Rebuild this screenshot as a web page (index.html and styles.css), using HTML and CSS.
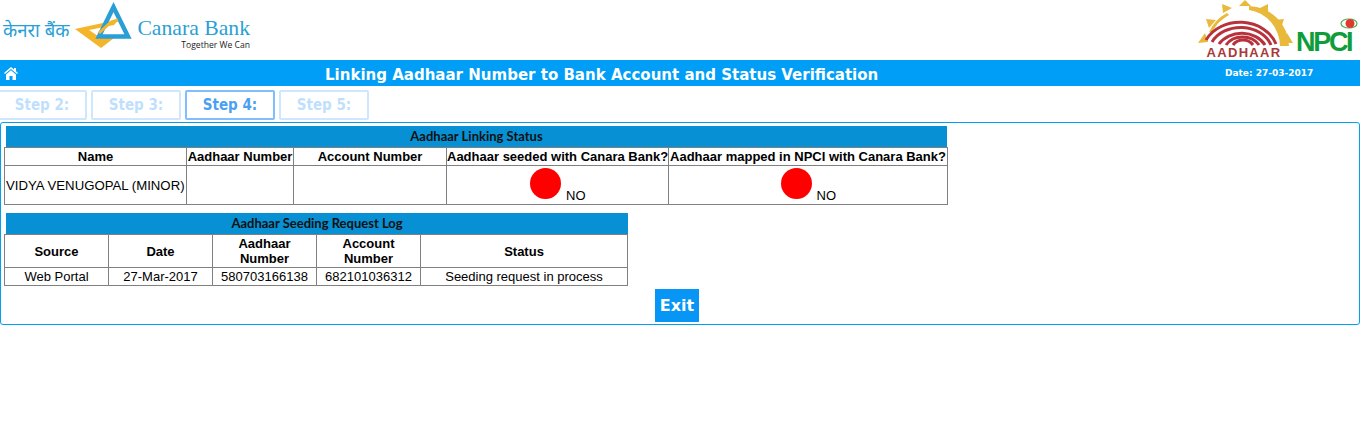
FILE: index.html
```html
<!DOCTYPE html>
<html lang="en">
<head>
<meta charset="utf-8">
<title>Linking Aadhaar Number to Bank Account</title>
<link rel="stylesheet" href="styles.css">
</head>
<body>
<header class="logos">
  <div class="canara">
    <span class="hindi">केनरा बैंक</span>
    <svg class="tri" width="62" height="50" viewBox="0 0 62 50">
      <path d="M1 29 L45 19.500 L40 25 L15 30 L27 38 L40 38 L27 48 Z" fill="#f5b52a"/>
      <path d="M25 36.500 L39.500 7 L54 36.500 Z" fill="none" stroke="#2a9fd6" stroke-width="4.500" stroke-linejoin="miter"/>
      <path d="M25 33 L37 22 L44 20" fill="none" stroke="#f5b52a" stroke-width="3"/>
    </svg>
    <div class="canara-name">
      <span class="cname">Canara Bank</span>
      <span class="ctag">Together We Can</span>
    </div>
  </div>
  <div class="partners">
    <svg class="aadhaar" width="97" height="60" viewBox="0 0 97 60">
      <g fill="#e8b93a">
        <path d="M48 0 L54 6 L42 6 Z"/>
        <path d="M25 4 L35 8 L26 13 Z"/>
        <path d="M71 4 L71 13 L61 9 Z"/>
        <path d="M9 19 L19 20 L12 28 Z"/>
        <path d="M87 19 L84 28 L77 20 Z"/>
        <path d="M1 43 L8 33 L11 42 Z"/>
        <path d="M96 43 L88 43 L90 33 Z"/>
      </g>
      <path d="M52 6 A41 41 0 0 1 92 46 L83 46 A36 37 0 0 0 52 10 Z" fill="#e8b93a"/>
      <path d="M12 32 A41 41 0 0 1 30 13 L32 15 A38 38 0 0 0 15 33 Z" fill="#e8b93a"/>
      <g fill="none" stroke="#b8323c" stroke-width="3">
        <path d="M9 40 A38 32 0 0 1 79 44"/>
        <path d="M15 42 A32 26 0 0 1 74 45"/>
        <path d="M22 44 A26 21 0 0 1 68 45"/>
        <path d="M29 45 A19 16 0 0 1 62 45"/>
        <path d="M36 45 A12 11 0 0 1 56 45"/>
      </g>
      <text class="aadhaar-word" x="47" y="57" text-anchor="middle">AADHAAR</text>
    </svg>
    <div class="npci">
      <span class="npci-word">NPCI</span>
      <svg class="npci-dot" width="18" height="11" viewBox="0 0 18 11">
        <ellipse cx="9" cy="5.500" rx="8" ry="4.500" fill="none" stroke="#4caf50" stroke-width="1.200"/>
        <circle cx="10" cy="5.500" r="4.500" fill="#e0392f"/>
      </svg>
    </div>
  </div>
</header>

<div class="banner">
  <svg class="home" width="14" height="13" viewBox="0 0 14 13">
    <path d="M7 0 L10 2.600 V1 H12 V4.300 L14 6 L13 7 L7 2 L1 7 L0 6 Z M2 7.500 L7 3.300 L12 7.500 V13 H8.500 V9 H5.500 V13 H2 Z" fill="#fff"/>
  </svg>
  <h1 class="banner-title">Linking Aadhaar Number to Bank Account and Status Verification</h1>
  <span class="banner-date">Date: 27-03-2017</span>
</div>

<nav class="steps">
  <span class="step">Step 2:</span>
  <span class="step">Step 3:</span>
  <span class="step step-active">Step 4:</span>
  <span class="step">Step 5:</span>
</nav>

<main class="panel">
  <section class="block block-one">
    <div class="caption">Aadhaar Linking Status</div>
    <table class="grid grid-one">
      <colgroup><col class="c1"><col class="c2"><col class="c3"><col class="c4"><col class="c5"></colgroup>
      <tr class="head-row"><th>Name</th><th>Aadhaar Number</th><th>Account Number</th><th>Aadhaar seeded with Canara Bank?</th><th>Aadhaar mapped in NPCI with Canara Bank?</th></tr>
      <tr class="status-row">
        <td class="name-cell">VIDYA VENUGOPAL (MINOR)</td><td></td><td></td>
        <td class="center"><span class="dot"></span> <span class="no">NO</span></td>
        <td class="center"><span class="dot"></span> <span class="no">NO</span></td>
      </tr>
    </table>
  </section>

  <section class="block block-two">
    <div class="caption">Aadhaar Seeding Request Log</div>
    <table class="grid grid-two">
      <colgroup><col class="d1"><col class="d1"><col class="d1"><col class="d1"><col class="d5"></colgroup>
      <tr class="log-head"><th>Source</th><th>Date</th><th>Aadhaar<br>Number</th><th>Account<br>Number</th><th>Status</th></tr>
      <tr class="log-row"><td>Web Portal</td><td>27-Mar-2017</td><td>580703166138</td><td>682101036312</td><td>Seeding request in process</td></tr>
    </table>
  </section>

  <div class="actions"><button class="exit" type="button">Exit</button></div>
</main>
</body>
</html>
```
FILE: styles.css
```css
* { box-sizing: border-box; }
html, body { margin: 0; padding: 0; background: #fff; }
body { font-family: "Liberation Sans", Arial, sans-serif; color: #000; height: 441px; overflow: hidden; }

.logos { height: 60px; display: flex; justify-content: space-between; }
.canara { display: flex; align-items: flex-start; padding-left: 3px; }
.hindi { font-family: "Noto Sans", "DejaVu Sans", sans-serif; font-size: 18.500px; color: #2a9fd6; margin-top: 17px; width: 71px; white-space: nowrap; }
.tri { display: block; }
.canara-name { display: flex; flex-direction: column; align-items: flex-end; margin-left: -1px; margin-top: 16px; width: 115px; }
.cname { font-family: "Liberation Serif", serif; font-size: 21.700px; line-height: 25px; color: #2a9fd6; white-space: nowrap; }
.ctag { font-family: "Open Sans", sans-serif; font-size: 8.600px; line-height: 10px; color: #222; white-space: nowrap; margin-top: -1px; }
.partners { display: flex; align-items: flex-start; }
.aadhaar { display: block; }
.aadhaar-word { font-family: "Liberation Sans", sans-serif; font-weight: 700; font-size: 13px; letter-spacing: 1.300px; fill: #a83a3a; }
.npci { position: relative; width: 66px; height: 60px; padding-top: 27px; padding-left: 2px; }
.npci-dot { position: absolute; right: 2px; top: 18px; }
.npci-word { font-family: "Liberation Sans", sans-serif; font-weight: 700; font-size: 27px; line-height: 30px; letter-spacing: -2.300px; color: #0e9d3a; }

.banner { height: 26px; background: #009ef7; color: #fff; display: flex; align-items: center; position: relative; }
.home { margin-left: 4px; flex: none; }
.banner-title { position: absolute; left: 325px; top: 0; margin: 0; font-family: "DejaVu Sans", Verdana, sans-serif; font-stretch: condensed; font-weight: 700; font-size: 16.700px; line-height: 28px; white-space: nowrap; }
.banner-date { position: absolute; left: 1225px; top: 0; font-family: "DejaVu Sans", Verdana, sans-serif; font-weight: 700; font-size: 9px; line-height: 27px; white-space: nowrap; }

.steps { display: flex; gap: 4px; margin-top: 4px; height: 30px; margin-left: -3px; }
.step { width: 90px; height: 30px; border: 2px solid #cfe6ff; border-radius: 2px; color: #bfdfff; font-family: "DejaVu Sans", Verdana, sans-serif; font-stretch: condensed; font-weight: 700; font-size: 15px; line-height: 26px; text-align: center; }
.step-active { border-color: #7fbfff; color: #4a9ff5; }

.panel { margin-top: 2px; height: 203px; border: 1px solid #00a0f0; border-radius: 3px; padding: 3px 0 0 3px; }
.block-two { margin-top: 8px; }
.caption { margin-left: 2px; height: 21px; background: #0790d3; text-align: center; font-family: "Lato", sans-serif; font-weight: 700; font-size: 13px; line-height: 21px; color: #111; }
.block-one .caption { width: 941px; }
.block-two .caption { width: 622px; }
.grid { border-collapse: collapse; table-layout: fixed; font-size: 13px; }
.grid th, .grid td { border: 1px solid #808080; padding: 0; text-align: center; }
.grid-one { width: 944px; }
.grid-two { width: 624px; }
.c1 { width: 182px; } .c2 { width: 107px; } .c3 { width: 153px; } .c4 { width: 222px; } .c5 { width: 279px; }
.d1 { width: 104px; } .d5 { width: 207px; }
.head-row { height: 18px; }
.status-row { height: 39px; }
.status-row td { line-height: 15px; }
.head-row th { line-height: 16px; white-space: nowrap; }
.grid .name-cell { text-align: left; padding-left: 1px; white-space: nowrap; font-size: 13.200px; }
.grid .center { padding-top: 1px; }
.dot { display: inline-block; width: 31px; height: 31px; border-radius: 50%; background: #f00; vertical-align: 1px; margin-left: 1px; }
.no { margin-left: 1px; }
.log-head { height: 33px; }
.log-head th { line-height: 15px; }
.log-row { height: 18px; }
.log-row td { line-height: 16px; white-space: nowrap; }
.actions { display: flex; padding-left: 651px; margin-top: 3px; }
.exit { width: 44px; height: 33px; border: 0; padding: 0; background: #0796f5; color: #fff; font-family: "DejaVu Sans", Verdana, sans-serif; font-weight: 700; font-size: 16px; }
```
